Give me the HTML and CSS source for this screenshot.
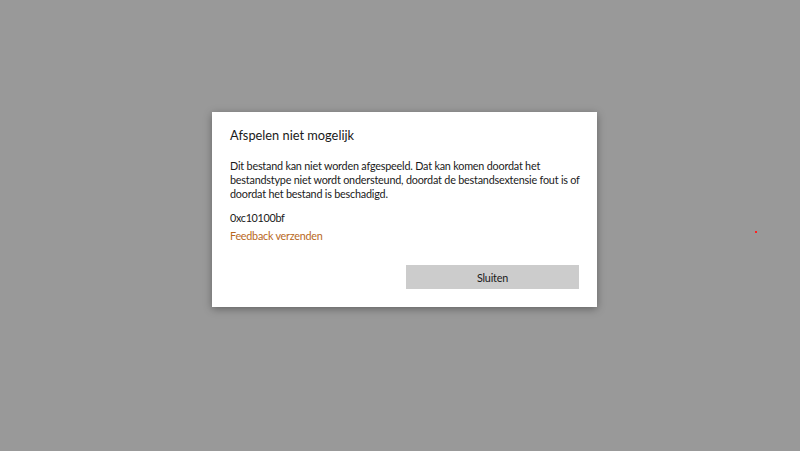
FILE: index.html
```html
<!DOCTYPE html>
<html>
<head>
<meta charset="utf-8" />
<title>Afspelen niet mogelijk</title>
<link rel="stylesheet" href="styles.css">
</head>
<body>
	<div class="stage">
		<div class="dialog">
			<h2 class="title">Afspelen niet mogelijk</h2>
			<p class="msg">Dit bestand kan niet worden afgespeeld. Dat kan komen doordat het<br>bestandstype niet wordt ondersteund, doordat de bestandsextensie fout is of<br>doordat het bestand is beschadigd.</p>
			<p class="code">0xc10100bf</p>
			<a class="link" href="#">Feedback verzenden</a>
			<div class="actions">
				<button class="btn">Sluiten</button>
			</div>
		</div>
		<span class="dot"></span>
	</div>
</body>
</html>
```

FILE: styles.css
```css
html,body{margin:0;height:100%;}
body{
	background:#999999;
	font-family:Lato,"Liberation Sans",sans-serif;
	color:#1a1a1a;
	overflow:hidden;
}
.stage{
	position:relative;
	height:100%;
	padding:112px 0 0 212px;
	box-sizing:border-box;
}
.dialog{
	width:385px;
	height:195px;
	box-sizing:border-box;
	background:#fff;
	padding:15px 18px 18px 18px;
	box-shadow:0 2px 8px rgba(0,0,0,0.35);
	display:flex;
	flex-direction:column;
}
.title{
	margin:0;
	font-size:12.8px;
	font-weight:normal;
	line-height:16px;
}
.msg{
	margin:16px 0 0 0;
	font-size:10.8px;
	letter-spacing:-0.2px;
	line-height:14px;
	white-space:nowrap;
}
.code{
	margin:10px 0 0 0;
	font-size:10.8px;
	letter-spacing:-0.3px;
	line-height:14px;
}
.link{
	margin-top:4px;
	font-size:10.8px;
	letter-spacing:-0.25px;
	line-height:14px;
	color:#b8681c;
	text-decoration:none;
	align-self:flex-start;
}
.actions{
	margin-top:auto;
	display:flex;
	justify-content:flex-end;
}
.btn{
	width:173px;
	height:24px;
	border:none;
	background:#cccccc;
	font-family:inherit;
	font-size:10.8px;
	letter-spacing:-0.2px;
	color:#1a1a1a;
	padding:0;
}
.dot{
	position:absolute;
	left:755px;
	top:231px;
	width:2px;
	height:2px;
	background:#ff2020;
}
```
